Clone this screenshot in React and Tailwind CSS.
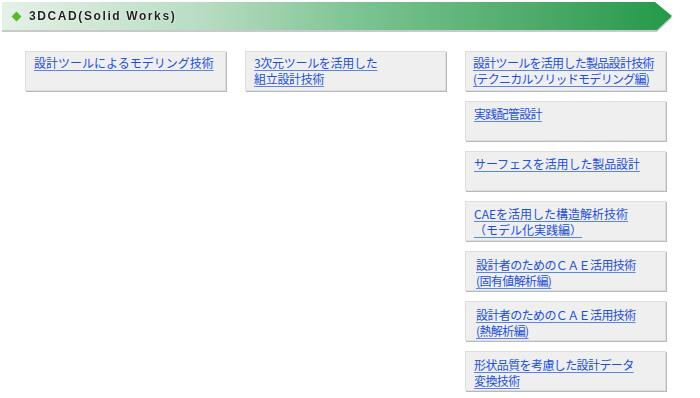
import React from "react";

const jp = "font-['Noto_Sans_CJK_JP','Noto_Sans',sans-serif]";

const col1 = [{ lines: ["設計ツールによるモデリング技術"], pt: "pt-[3px]", tr: "tracking-[0px]" }];
const col2 = [{ lines: ["3次元ツールを活用した", "組立設計技術"], pt: "pt-[3px]", tr: "tracking-[-0.3px]" }];
const col3 = [
  { lines: ["設計ツールを活用した製品設計技術", "(テクニカルソリッドモデリング編)"], pt: "pt-[3px]", tr: "tracking-[-0.7px]", pl: "pl-[7px]" },
  { lines: ["実践配管設計"], pt: "pt-[4px]", tr: "tracking-[-0.7px]" },
  { lines: ["サーフェスを活用した製品設計"], pt: "pt-[4px]", tr: "tracking-[-0.1px]" },
  { lines: ["CAEを活用した構造解析技術", "（モデル化実践編）"], pt: "pt-[4px]", tr: "tracking-[0px]" },
  { lines: ["設計者のためのＣＡＥ活用技術", "(固有値解析編)"], pt: "pt-[5px]", tr: "tracking-[-0.6px]", pl: "pl-[10px]" },
  { lines: ["設計者のためのＣＡＥ活用技術", "(熱解析編)"], pt: "pt-[5px]", tr: "tracking-[-0.6px]", pl: "pl-[10px]" },
  { lines: ["形状品質を考慮した設計データ", "変換技術"], pt: "pt-[5px]", tr: "tracking-[-0.6px]" },
];

function LinkBox({ item }) {
  return (
    <div className={`h-10 w-[201px] overflow-hidden border border-[#dedede] bg-[#efefef] shadow-[1px_1px_0_#b9b9b9] ${jp} text-[12px] leading-[16px] ${item.pt} ${item.pl || "pl-[8px]"}`}>
      <a href="#" className={`${item.tr} text-[#1d4fdc] underline underline-offset-2 decoration-[#5c84e6]`}>
        {item.lines.map((l, i) => (
          <React.Fragment key={i}>
            {i > 0 && <br />}
            {l}
          </React.Fragment>
        ))}
      </a>
    </div>
  );
}

export default function App() {
  return (
    <div className="w-[700px] h-[398px] bg-white overflow-hidden">
      {/* Header banner */}
      <div className="pt-[2px] pl-[2px] [filter:drop-shadow(0_2px_0_#c9c9c9)]">
        <div className="h-[28px] w-[670px] flex items-center bg-[linear-gradient(to_right,#e4f1e7_0%,#b8dcc2_30%,#78c28f_55%,#4daa6a_80%,#239a48_100%)] [clip-path:polygon(0_0,653px_0,670px_14px,655px_28px,0_28px)]">
          <div className="ml-[11px] w-[7px] h-[7px] rotate-45 bg-[#5db62c]" />
          <span className="ml-[9px] font-['Liberation_Sans',Arial,sans-serif] font-bold text-[12px] tracking-[1.6px] text-[#1f1f1f] [text-shadow:0_0_2px_#fff,0_0_1px_#fff]">
            3DCAD(Solid Works)
          </span>
        </div>
      </div>

      {/* Link columns */}
      <div className="grid grid-cols-[201px_201px_201px] gap-x-[19px] pl-[25px] pt-[21px] items-start">
        <div className="flex flex-col gap-[10px]">
          {col1.map((it, i) => <LinkBox key={i} item={it} />)}
        </div>
        <div className="flex flex-col gap-[10px]">
          {col2.map((it, i) => <LinkBox key={i} item={it} />)}
        </div>
        <div className="flex flex-col gap-[10px]">
          {col3.map((it, i) => <LinkBox key={i} item={it} />)}
        </div>
      </div>
    </div>
  );
}
